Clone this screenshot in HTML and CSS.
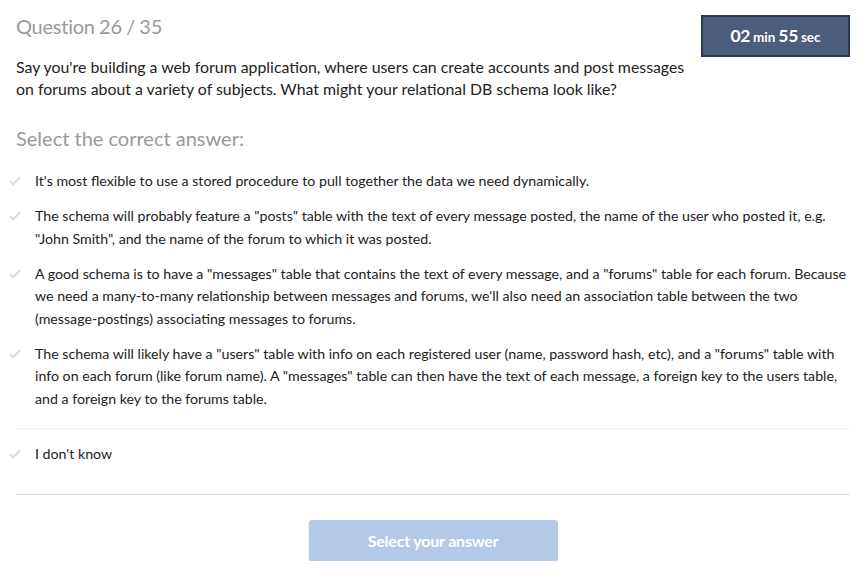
FILE: index.html
```html
<!DOCTYPE html>
<html>
<head>
<meta charset="utf-8">
<link rel="stylesheet" href="styles.css">
</head>
<body>
<div class="page">
  <div class="header">
    <div class="head-left">
      <h1 class="qnum">Question 26 / 35</h1>
      <p class="qtext">Say you're building a web forum application, where users can create accounts and post messages on forums about a variety of subjects. What might your relational DB schema look like?</p>
    </div>
    <div class="timer"><span class="big">02</span> <span class="small">min</span> <span class="big">55</span> <span class="small">sec</span></div>
  </div>
  <h2 class="select">Select the correct answer:</h2>
  <ul class="options">
    <li class="opt"><svg class="check" viewBox="0 0 12 10"><path d="M1 5.2 L4.2 8.2 L11 1.2" /></svg><span>It's most flexible to use a stored procedure to pull together the data we need dynamically.</span></li>
    <li class="opt"><svg class="check" viewBox="0 0 12 10"><path d="M1 5.2 L4.2 8.2 L11 1.2" /></svg><span>The schema will probably feature a "posts" table with the text of every message posted, the name of the user who posted it, e.g. "John Smith", and the name of the forum to which it was posted.</span></li>
    <li class="opt"><svg class="check" viewBox="0 0 12 10"><path d="M1 5.2 L4.2 8.2 L11 1.2" /></svg><span>A good schema is to have a "messages" table that contains the text of every message, and a "forums" table for each forum. Because we need a many-to-many relationship between messages and forums, we'll also need an association table between the two (message-postings) associating messages to forums.</span></li>
    <li class="opt"><svg class="check" viewBox="0 0 12 10"><path d="M1 5.2 L4.2 8.2 L11 1.2" /></svg><span>The schema will likely have a "users" table with info on each registered user (name, password hash, etc), and a "forums" table with info on each forum (like forum name). A "messages" table can then have the text of each message, a foreign key to the users table, and a foreign key to the forums table.</span></li>
    <li class="opt idk"><svg class="check" viewBox="0 0 12 10"><path d="M1 5.2 L4.2 8.2 L11 1.2" /></svg><span>I don't know</span></li>
  </ul>
  <div class="actions">
    <button class="submit">Select your answer</button>
  </div>
</div>
</body>
</html>
```

FILE: styles.css
```css
* { box-sizing: border-box; }
html, body { margin: 0; padding: 0; background: #fff; }
body { font-family: Lato, "Open Sans", sans-serif; color: #222; }
.page { width: 866px; padding: 0 16px; }
.header { display: flex; justify-content: space-between; align-items: flex-start; }
.head-left { width: 680px; }
.qnum { margin: 13px 0 0; font-size: 20px; font-weight: 400; color: #999; line-height: 26px; letter-spacing: -0.25px; word-spacing: -0.5px; }
.qtext { margin: 17px 0 0; font-size: 15.85px; line-height: 22px; color: #222; }
.timer { margin-top: 15px; width: 149px; height: 42px; background: #4a5d7c; border: 2px solid #2c3a50; color: #fff; text-align: center; line-height: 38px; font-weight: 700; word-spacing: -1px; }
.timer .big { font-size: 17.5px; letter-spacing: -0.3px; }
.timer .small { font-size: 13.5px; }
.select { margin: 25px 0 0; font-size: 20px; font-weight: 400; color: #999; line-height: 26px; letter-spacing: 0; }
.options { list-style: none; margin: 19px 0 0; padding: 0; }
.opt { display: flex; align-items: flex-start; font-size: 14.2px; line-height: 22.5px; padding-bottom: 12.5px; color: #222; }
.opt .check { width: 12px; height: 10px; margin: 6px 0 0 -7px; flex: none; fill: none; stroke: #dcdcdc; stroke-width: 2.2; }
.opt span { margin-left: 14px; }
.opt.idk { border-top: 1px solid #eee; padding-top: 14px; padding-bottom: 29px; margin-top: 5px; border-bottom: 1px solid #ddd; }
.actions { display: flex; justify-content: center; padding-top: 25px; }
.submit { width: 249px; height: 41px; border: none; border-radius: 3px; background: #b3c9e8; color: #fff; font-family: Lato, sans-serif; font-weight: 700; font-size: 16px; letter-spacing: -0.2px; box-shadow: 0 2px 2px rgba(0,0,0,0.12); }
```
